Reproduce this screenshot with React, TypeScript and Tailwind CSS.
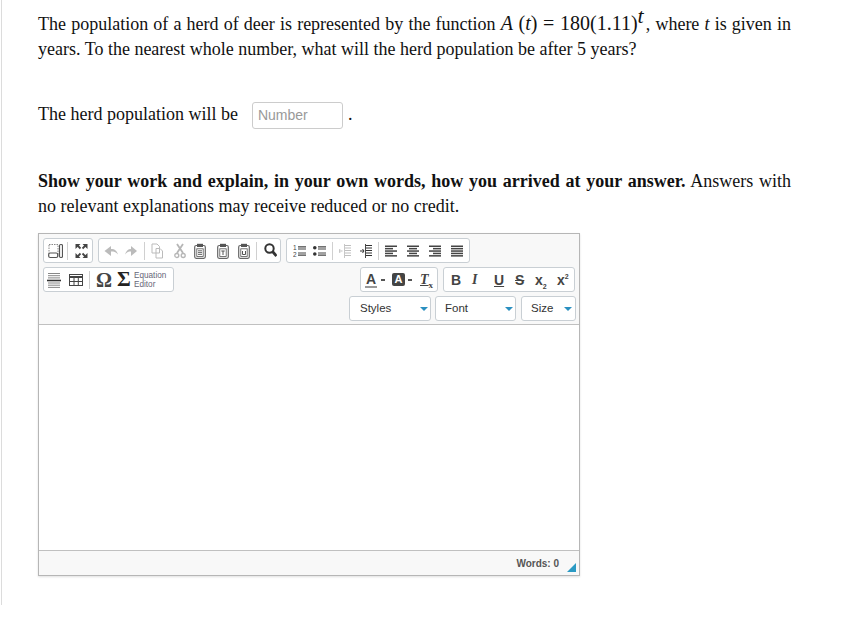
import React from "react";

const Sep = ({ className = "mx-[3px]" }: { className?: string }) => <span className={`w-px h-[18px] bg-[#d0d0d0] shrink-0 ${className}`} />;

const Group = ({ children, className = "" }: { children: React.ReactNode; className?: string }) => (
  <div className={`flex items-center h-[25px] border border-[#c9cfd4] rounded-[3px] bg-white shrink-0 ${className}`}>{children}</div>
);

const I = ({ children, w = 16, dim = false, className = "" }: { children: React.ReactNode; w?: number; dim?: boolean; className?: string }) => (
  <svg width={w} height={16} viewBox={`0 0 ${w} 16`} className={`shrink-0 ${dim ? "opacity-30" : ""} ${className}`}>
    {children}
  </svg>
);

const Paste = ({ inner, className = "" }: { inner: React.ReactNode; className?: string }) => (
  <I w={12} className={className}>
    <rect x="0.700" y="2.500" width="10.600" height="12.800" rx="1.500" fill="none" stroke="#666" strokeWidth="1.200" />
    <rect x="3" y="0.800" width="6" height="3.200" fill="#555" />
    <rect x="2.800" y="5.800" width="6.400" height="7.600" fill="none" stroke="#555" strokeWidth="0.800" />
    {inner}
  </I>
);

const Lines = ({ rows, className = "" }: { rows: [number, number][]; className?: string }) => (
  <I w={12} className={className}>
    {rows.map(([x, w], i) => (
      <rect key={i} x={x} y={2.500 + i * 2.400} width={w} height="1.500" fill="#444" />
    ))}
  </I>
);

const Indent = ({ dim, className = "", out }: { dim?: boolean; className?: string; out?: boolean }) => (
  <I w={12} dim={dim} className={className}>
    <path d="M6 2.500h6M6 5h6M6 7.500h6M6 10h6M6 12.500h6" stroke="#333" strokeWidth="1" fill="none" />
    <path d="M5.500 1v14" stroke="#333" strokeWidth="0.900" />
    <path d="M0 8h3.500" stroke="#333" strokeWidth="1" />
    {out ? <path d="M1 6L-0 8l1 2" stroke="#333" fill="none" /> : <path d="M2.500 6l1.500 2-1.500 2" stroke="#333" fill="none" />}
  </I>
);

const Combo = ({ label, w, pad }: { label: string; w: string; pad: string }) => (
  <div className={`flex items-center justify-between h-[25px] border border-[#c9cfd4] rounded-[3px] bg-white text-[11.500px] text-[#333] ${w} ${pad}`}>
    <span>{label}</span>
    <span className="w-0 h-0 border-x-[4px] border-x-transparent border-t-[4px] border-t-[#2a8fc0]" />
  </div>
);

const serif = { fontFamily: '"Liberation Serif", serif' };

export default function App() {
  return (
    <div className="w-[848px] h-[628px] bg-white overflow-hidden" style={serif}>
      <div className="ml-px h-[605px] border-l border-[#dcdcdc] pl-[36px] pt-[11px] text-[18px] leading-[25px] text-[#111]">
        <p className="w-[753px] text-justify">
          The population of a herd of deer is represented by the function{" "}
          <span className="text-[20px]">
            <i>A</i> (<i>t</i>) = 180(1.11)<i className="text-[22px] align-[7px] leading-[0] mr-[2px]">t</i>
          </span>
          , where <i>t</i> is given in years. To the nearest whole number, what will the herd population be after 5 years?
        </p>

        <div className="flex items-center mt-[40px] h-[27px]">
          <span className="mb-[2px]">The herd population will be</span>
          <div
            className="ml-[14px] w-[91px] h-[27px] border border-[#ccc] rounded-[3px] flex items-center pl-[5px] text-[14px] text-[#999]"
            style={{ fontFamily: '"Liberation Sans", sans-serif' }}
          >
            Number
          </div>
          <span className="ml-[5px] mb-[2px]">.</span>
        </div>

        <p className="w-[753px] mt-[40px] text-justify">
          <b>Show your work and explain, in your own words, how you arrived at your answer.</b> Answers with no relevant explanations may receive reduced or no credit.
        </p>

        <div
          className="mt-[14px] w-[542px] h-[343px] border border-[#b6b6b6] flex flex-col shadow-[0_1px_2px_rgba(0,0,0,0.12)]"
          style={{ fontFamily: '"Liberation Sans", sans-serif' }}
        >
          <div className="h-[91px] bg-[#f8f8f8] border-b border-[#c0c0c0] pt-[4px] pl-[4px] pr-[3px] flex flex-col gap-[4px]">
            <div className="flex gap-[5px]">
              <Group className="w-[50px] pl-[4px]">
                <I w={15}>
                  <rect x="1" y="1.500" width="9" height="12" fill="none" stroke="#888" strokeWidth="1" strokeDasharray="1.500 1" />
                  <rect x="0.700" y="10" width="9" height="4.500" rx="1.500" fill="#fff" stroke="#555" strokeWidth="1.200" />
                  <rect x="11.500" y="1.500" width="3" height="13" rx="1.200" fill="none" stroke="#555" strokeWidth="1.200" />
                </I>
                <Sep className="ml-[4px] mr-[7px]" />
                <I w={13}>
                  <g stroke="#444" strokeWidth="1.800" fill="none">
                    <path d="M2 2l3.500 3.500M11 2L7.500 5.500M2 14l3.500-3.500M11 14l-3.500-3.500" />
                  </g>
                  <g fill="#444">
                    <path d="M0.500 1h5L0.500 6z" />
                    <path d="M12.500 1h-5l5 5z" />
                    <path d="M0.500 15h5l-5-5z" />
                    <path d="M12.500 15h-5l5-5z" />
                  </g>
                </I>
              </Group>
              <Group className="w-[183px] pl-[5px]">
                <I w={14} dim>
                  <path d="M0.500 8L7 3v3c4 0 6 2 7 5.500-2-2.500-4-3-7-3V13z" fill="#222" />
                </I>
                <I w={12} dim className="ml-[7px]">
                  <path d="M12 8L6 3v3C3 6 1 8 0 11.500c2-2.500 3.500-3 6-3V13z" fill="#222" />
                </I>
                <Sep className="ml-[7px] mr-[6px]" />
                <I w={12} dim>
                  <path d="M1 1h5l2.500 2.500V10H1zM5 5.500h4l2.500 2.500v7H5z" fill="#fff" stroke="#222" strokeWidth="1" />
                </I>
                <I w={12} dim className="ml-[11px]">
                  <path d="M3 1l6 9M9 1L3 10" stroke="#111" strokeWidth="1.800" fill="none" />
                  <circle cx="2.800" cy="12.500" r="2" fill="none" stroke="#111" strokeWidth="1.300" />
                  <circle cx="9.200" cy="12.500" r="2" fill="none" stroke="#111" strokeWidth="1.300" />
                </I>
                <Paste className="ml-[8px]" inner={<path d="M4 7.800h4M4 9.600h4M4 11.400h4" stroke="#555" strokeWidth="0.900" />} />
                <Paste className="ml-[11px]" inner={<path d="M4.300 8h3.400M6 8v4" stroke="#555" strokeWidth="1" />} />
                <Paste className="ml-[9px]" inner={<path d="M4.500 8v3.500h3V8" stroke="#555" strokeWidth="1" fill="none" />} />
                <Sep className="ml-[6px] mr-[7px]" />
                <I w={13}>
                  <circle cx="5.500" cy="5.500" r="4.200" fill="none" stroke="#333" strokeWidth="2" />
                  <path d="M8.500 8.500l4 4.500" stroke="#333" strokeWidth="2.800" />
                </I>
              </Group>
              <Group className="w-[184px] pl-[6px]">
                <I w={13}>
                  <text x="0" y="7" fontSize="6.500" fill="#444">1</text>
                  <text x="0" y="13.500" fontSize="6.500" fill="#444">2</text>
                  <path d="M5 3.800h8M5 6h8M5 10h8M5 12.200h8" stroke="#444" strokeWidth="1.200" />
                </I>
                <I w={13} className="ml-[7px]">
                  <circle cx="1.800" cy="4.800" r="1.800" fill="#333" />
                  <circle cx="1.800" cy="11" r="1.800" fill="#333" />
                  <path d="M5 3.800h8M5 6h8M5 10h8M5 12.200h8" stroke="#444" strokeWidth="1.200" />
                </I>
                <Sep className="ml-[6px] mr-[6px]" />
                <Indent dim out />
                <Indent className="ml-[9px]" />
                <Sep className="ml-[6px] mr-[6px]" />
                <Lines rows={[[0, 12], [0, 8], [0, 12], [0, 8], [0, 12]]} />
                <Lines className="ml-[10px]" rows={[[0, 12], [2, 8], [0, 12], [2, 8], [0, 12]]} />
                <Lines className="ml-[10px]" rows={[[0, 12], [4, 8], [0, 12], [4, 8], [0, 12]]} />
                <Lines className="ml-[10px]" rows={[[0, 12], [0, 12], [0, 12], [0, 12], [0, 12]]} />
              </Group>
            </div>

            <div className="flex justify-between">
              <Group className="w-[131px] pl-[3px]">
                <I w={14}>
                  <path d="M1 1.500h12M1 3.700h12M1 5.900h12M1 11h12M1 13.200h12M1 15.400h12" stroke="#888" strokeWidth="1" />
                  <path d="M0 8.500h14" stroke="#333" strokeWidth="1.600" />
                </I>
                <I w={14} className="ml-[8px]">
                  <rect x="0.500" y="2.500" width="13" height="11" fill="#fff" stroke="#444" />
                  <path d="M0.500 5h13" stroke="#444" strokeWidth="2" />
                  <path d="M0.500 9.500h13M5 4v10M9.300 4v10" stroke="#444" />
                </I>
                <Sep className="ml-[6px] mr-[6px]" />
                <span className="w-[21px] text-[20px] leading-none font-bold text-[#444]" style={serif}>Ω</span>
                <span className="w-[17px] text-[21px] leading-none font-bold text-[#222]" style={serif}>Σ</span>
                <span className="text-[8.200px] leading-[9px] text-[#667]">
                  Equation
                  <br />
                  Editor
                </span>
              </Group>
              <div className="flex gap-[5px] mr-[1px]">
                <Group className="w-[78px] pl-[4px]">
                  <span className="text-[14px] leading-[14px] font-bold text-[#444] border-b-2 border-[#999] w-[12px] text-center">A</span>
                  <span className="w-[4px] h-[2px] bg-[#555] ml-[4px]" />
                  <span className="ml-[7px] w-[13px] h-[13px] rounded-[2px] bg-[#444] text-white text-[11px] leading-[13px] font-bold text-center">A</span>
                  <span className="w-[4px] h-[2px] bg-[#555] ml-[3px]" />
                  <span className="ml-[8px] text-[14px] leading-none font-bold italic text-[#444]" style={serif}>
                    <span className="underline">T</span>
                    <span className="text-[9px] not-italic align-sub leading-[0]">x</span>
                  </span>
                </Group>
                <Group className="w-[132px] pl-[7px] text-[14px] leading-none text-[#444] font-bold">
                  <span className="w-[21px]">B</span>
                  <span className="w-[22px] italic" style={serif}>I</span>
                  <span className="w-[21px] underline">U</span>
                  <span className="w-[20px] line-through">S</span>
                  <span className="w-[22px]">
                    x<span className="text-[7px] align-sub leading-[0]">2</span>
                  </span>
                  <span>
                    x<span className="text-[7px] align-super leading-[0]">2</span>
                  </span>
                </Group>
              </div>
            </div>

            <div className="flex justify-end">
              <Combo label="Styles" w="w-[82px]" pad="pl-[10px] pr-[2px]" />
              <span className="w-[4px]" />
              <Combo label="Font" w="w-[81px]" pad="pl-[9px] pr-[2px]" />
              <span className="w-[5px]" />
              <Combo label="Size" w="w-[55px]" pad="pl-[9px] pr-[3px]" />
            </div>
          </div>

          <div className="flex-1 bg-white" />

          <div className="h-[25px] bg-[#f8f8f8] border-t border-[#c0c0c0] flex items-center justify-end text-[10px] font-bold text-[#555] pr-[20px] relative">
            Words: 0
            <svg width="9" height="9" className="absolute right-[3px] bottom-[3px]">
              <path d="M9 0v9H0z" fill="#2b9ac4" />
            </svg>
          </div>
        </div>
      </div>
    </div>
  );
}
